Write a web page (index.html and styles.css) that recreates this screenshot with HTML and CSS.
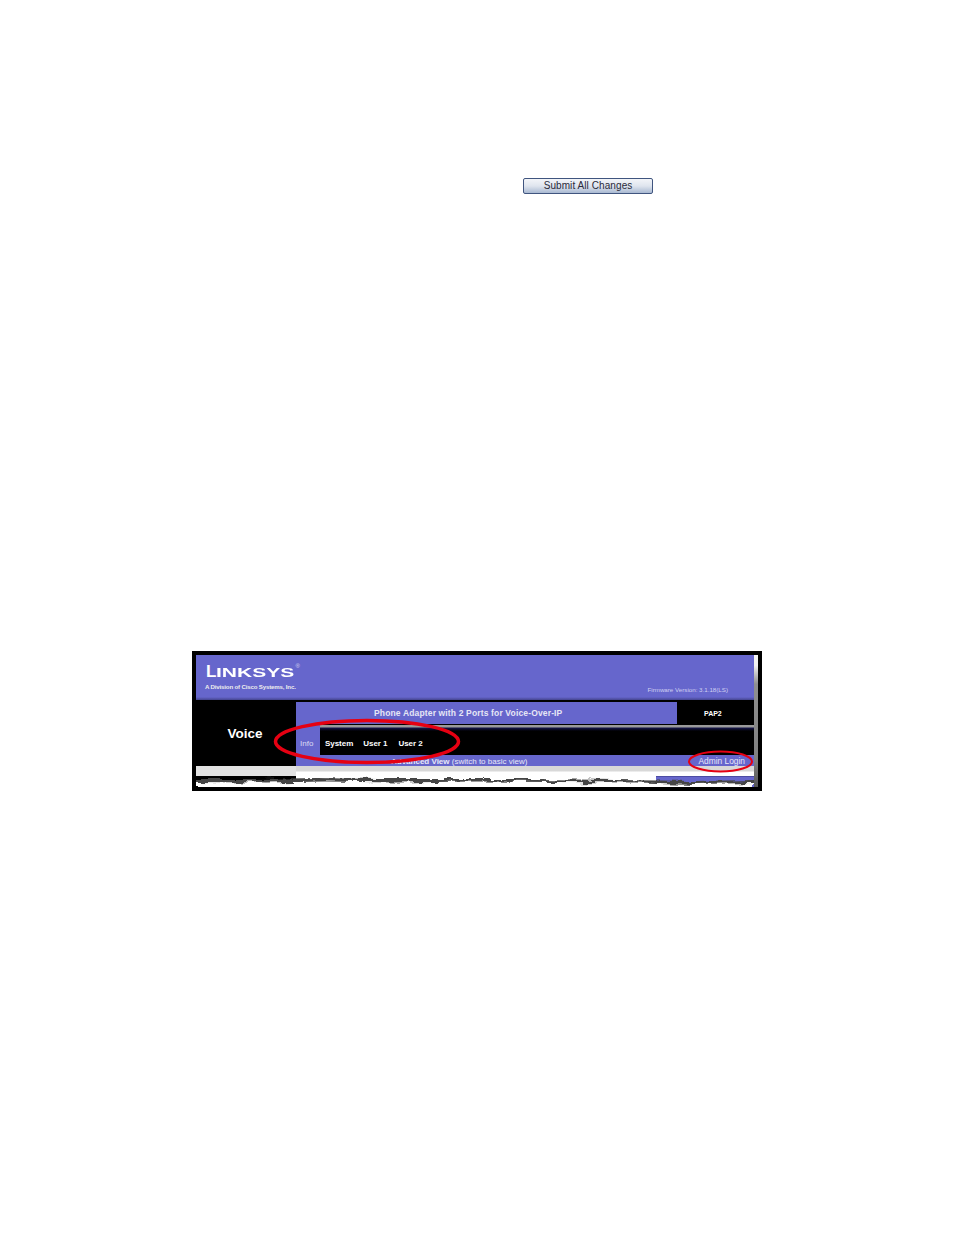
FILE: index.html
```html
<!DOCTYPE html>
<html lang="en">
<head>
<meta charset="utf-8">
<title>Linksys Voice</title>
<link rel="stylesheet" href="styles.css">
</head>
<body>
<div class="submit-row"><button class="submit" type="button">Submit All Changes</button></div>
<figure class="shot">
  <div class="panel">
    <header class="top">
      <div class="brand">
        <div class="logo">L<span class="logo-small">INKSYS</span><sup class="reg">®</sup></div>
        <div class="division">A Division of Cisco Systems, Inc.</div>
      </div>
      <div class="firmware">Firmware Version: 3.1.18(LS)</div>
    </header>
    <div class="body">
      <div class="voice">Voice</div>
      <div class="main">
        <div class="title-row">
          <div class="title">Phone Adapter with 2 Ports for Voice-Over-IP</div>
          <div class="model">PAP2</div>
        </div>
        <nav class="nav">
          <span class="info">Info</span>
          <div class="tabs"><span class="tab-system">System</span><span class="tab-u1">User 1</span><span>User 2</span></div>
        </nav>
        <div class="band">
          <span class="view"><b>Advanced View</b> (switch to basic view)</span>
          <span class="admin">Admin Login</span>
        </div>
      </div>
    </div>
    <div class="foot">
      <div class="foot-left"></div>
      <div class="foot-mid"></div>
      <div class="foot-right"></div>
    </div>
  </div>
  <div class="shade"></div>
  <svg class="tear" viewBox="0 0 558 21" aria-hidden="true">
    <defs>
      <filter id="rip" x="0" y="-40%" width="100%" height="180%">
        <feTurbulence type="fractalNoise" baseFrequency="0.06 0.12" numOctaves="4" seed="11" result="n"/>
        <feDisplacementMap in="SourceGraphic" in2="n" scale="8" xChannelSelector="R" yChannelSelector="G"/>
        <feGaussianBlur stdDeviation="0.6"/>
      </filter>
    </defs>
    <path class="tear-shadow" filter="url(#rip)" d="M0 13 L60 13 L120 12 L180 13 L260 13 L340 13 L420 14 L500 15 L558 14 L558 18 L420 18 L260 17 L100 17 L0 17 Z"/>
    <path class="tear-paper" filter="url(#rip)" d="M0 16 L70 16.500 L130 15.500 L200 16.500 L280 15.500 L360 16 L440 16.500 L500 18 L558 17 L558 28 L0 28 Z"/>
  </svg>
  <svg class="marks" viewBox="0 0 570 140" aria-hidden="true">
    <ellipse class="mark-wide" cx="175" cy="90.500" rx="91.500" ry="21"/>
    <ellipse class="mark-small" cx="528.500" cy="110.500" rx="31.500" ry="10"/>
  </svg>
</figure>
</body>
</html>
```
FILE: styles.css
```css
* { box-sizing: border-box; }
html, body { margin: 0; padding: 0; background: #fff; }
body { font-family: "Liberation Sans", Arial, sans-serif; width: 954px; height: 1235px; overflow: hidden; }

.submit-row { padding: 178px 0 0 523px; }
.submit {
  display: block; width: 130px; height: 16px; padding: 0 0 1px; margin: 0;
  font: 10px/13px "Liberation Sans", Arial, sans-serif; letter-spacing: 0.08px; color: #2a2a3a;
  border: 1px solid #40557f; border-radius: 2px;
  background: linear-gradient(#f3f5f9, #dfe5ee 50%, #a9b9d2);
}

.shot {
  position: relative; display: flex; margin: 457px 0 0 192px;
  width: 570px; height: 140px; border: 4px solid #000; background: #000;
  color: #fff;
}
.panel { width: 558px; height: 132px; display: flex; flex-direction: column; background: #000; }
.shade { width: 4px; height: 132px; background: linear-gradient(#f4f4f4, #f0f0f0 8%, #8f8f8f 22%, #808080 80%, #555); }

.top {
  height: 45px; flex: none; display: flex; justify-content: space-between; align-items: flex-end;
  background: linear-gradient(#6666cc 0, #6666cc 42px, #45458f 45px);
  padding: 0 26px 7px 9px;
}
.brand { display: flex; flex-direction: column; margin-bottom: 2px; }
.logo { font-size: 17px; line-height: 18px; font-weight: 700; white-space: nowrap; padding-left: 1px; }
.logo-small {
  font-size: 12.500px; display: inline-block; width: 79px; letter-spacing: 0;
  transform: scaleX(1.68); transform-origin: left bottom;
}
.reg { font-size: 6px; font-weight: 400; vertical-align: 9px; line-height: 0; color: #d8d8f0; }
.division { font-size: 6.100px; font-weight: 700; line-height: 9px; margin-top: 0; white-space: nowrap; color: #eee; letter-spacing: -0.16px; }
.firmware { font-size: 6.200px; line-height: 7px; color: #cfd0f2; white-space: nowrap; }

.body { display: flex; margin-top: 2px; height: 64px; flex: none; }
.voice { width: 100px; flex: none; padding-top: 24px; padding-right: 2px; text-align: center; font-size: 13.500px; line-height: 16px; font-weight: 700; }
.main { width: 458px; display: flex; flex-direction: column; }

.title-row { display: flex; height: 22px; flex: none; }
.title { width: 381px; background: #6666cc; padding-left: 78px; font-size: 8.500px; line-height: 22px; font-weight: 700; color: #e6e6f6; letter-spacing: 0.15px; white-space: nowrap; }
.model { width: 77px; padding-left: 27px; font-size: 7px; line-height: 23px; font-weight: 700; }

.nav { display: flex; height: 31px; flex: none; }
.info { width: 24px; flex: none; background: #6666cc; padding: 15px 0 0 4px; font-size: 8px; line-height: 10px; color: #dcdcf4; }
.tabs {
  flex: 1; display: flex; padding: 15px 0 0 5px; font-size: 8px; line-height: 10px; font-weight: 700;
  letter-spacing: -0.04px; white-space: nowrap;
  background: linear-gradient(#000 0, #000 1px, #9a9a9a 1px, #9a9a9a 3px, #15154a 4px, #000 7px);
}
.tab-system { margin-right: 10px; }
.tab-u1 { margin-right: 11px; }

.band {
  height: 11px; flex: none; background: #6666cc; display: flex; justify-content: space-between;
  font-size: 8px; line-height: 13px; color: #e8e8f8; white-space: nowrap; padding: 0 9px 0 95px;
}
.view b { font-weight: 700; }
.admin { font-size: 8.400px; }

.foot { height: 21px; flex: none; display: flex; background: #fff; }
.foot-left { width: 100px; background: linear-gradient(#e2e2e2 0, #e2e2e2 10px, #000 10px); }
.foot-mid { width: 360px; background: linear-gradient(#d8d8d8 0, #d8d8d8 5px, #fff 6px); }
.foot-right { width: 98px; background: linear-gradient(#d8d8d8 0, #d8d8d8 5px, #fff 6px, #fff 10px, #33337a 10px, #6666cc 11px); }

.tear { position: absolute; left: 0; top: 111px; width: 558px; height: 21px; overflow: hidden; }
.tear-shadow { fill: #444; }
.tear-paper { fill: #fff; }

.marks { position: absolute; left: -4px; top: -4px; width: 570px; height: 140px; }
.marks ellipse { fill: none; stroke: #e60012; }
.mark-wide { stroke-width: 3.500; }
.mark-small { stroke-width: 2; }
```
